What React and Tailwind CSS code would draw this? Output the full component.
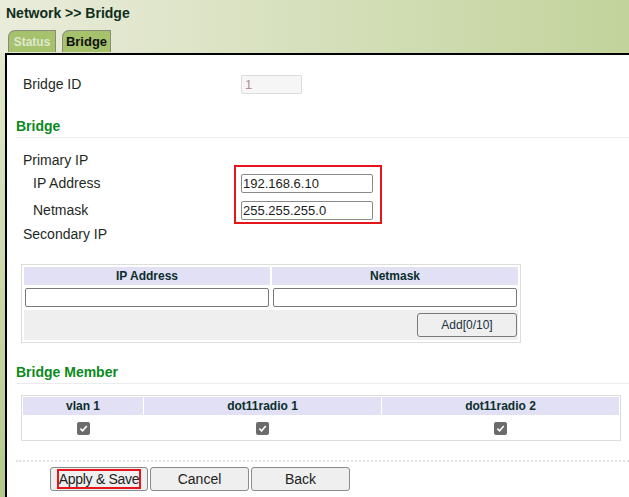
import React from "react";

const Tab = ({ label, active, className = "" }) => (
  <div
    className={`h-[22px] flex items-center justify-center border border-b-0 border-[#8a8a7a] rounded-tl-[7px] bg-[#a6c26c] text-[12px] font-bold ${
      active ? "text-[#111]" : "text-[#dfe7cf]"
    } ${className}`}
  >
    {label}
  </div>
);

const Check = () => (
  <span className="inline-flex items-center justify-center w-[13px] h-[13px] rounded-[2px] bg-[#6b6b6b]">
    <svg width="9" height="9" viewBox="0 0 10 10">
      <path d="M1.5 5.2 L4 7.6 L8.6 2.2" fill="none" stroke="#fff" strokeWidth="1.8" />
    </svg>
  </span>
);

const Heading = ({ children }) => (
  <div className="h-[20px] pb-[4px] border-b border-[#ececec] text-[14px] leading-[16px] font-bold text-[#0a8a1a]">
    {children}
  </div>
);

const Btn = ({ children, className = "" }) => (
  <button className={`h-[24px] bg-[#efefef] border border-[#8a8a8a] rounded-[3px] text-[14px] text-[#222] ${className}`}>
    {children}
  </button>
);

export default function App() {
  return (
    <div className="min-h-[497px] w-full overflow-hidden bg-gradient-to-b from-[#e8ecd7] to-[#b4c888] font-['Liberation_Sans',Arial,sans-serif]">
      {/* header band */}
      <div className="h-[53px] pt-[5px] pl-[6px] bg-gradient-to-r from-[#eaecdb] to-[#c2d39b]">
        <h1 className="text-[14px] leading-[16px] font-bold text-[#102e1c]">Network &gt;&gt; Bridge</h1>
        <div className="flex gap-[6px] mt-[9px] ml-[2px]">
          <Tab label="Status" className="w-[48px]" />
          <Tab label="Bridge" active className="w-[49px] text-[13px]" />
        </div>
      </div>

      {/* content panel */}
      <div className="ml-[5px] border-l-2 border-t-2 border-black bg-white min-h-[444px] pl-[9px] pt-px text-[14px] text-[#1e2a1e]">
        <div className="flex items-center h-[19px] mt-[19px]">
          <span className="w-[225px] pl-[7px]">Bridge ID</span>
          <input
            disabled
            value="1"
            readOnly
            className="w-[61px] h-[19px] border border-[#dcdcdc] rounded-[2px] bg-[#f6f6f6] px-[3px] text-[13px] text-[#b09090]"
          />
        </div>

        <div className="mt-[24px]">
          <Heading>Bridge</Heading>
        </div>

        <div className="relative pt-[14px]">
          <div className="h-[16px] leading-[16px] pl-[7px]">Primary IP</div>
          <div className="flex items-center h-[19px] mt-[6px]">
            <span className="w-[225px] pl-[17px]">IP Address</span>
            <input
              readOnly
              value="192.168.6.10"
              className="w-[132px] h-[19px] border border-[#8a8a8a] rounded-[2px] px-[1px] text-[13px] text-[#222]"
            />
          </div>
          <div className="flex items-center h-[19px] mt-[8px]">
            <span className="w-[225px] pl-[17px]">Netmask</span>
            <input
              readOnly
              value="255.255.255.0"
              className="w-[132px] h-[19px] border border-[#8a8a8a] rounded-[2px] px-[1px] text-[13px] text-[#222]"
            />
          </div>
          <div className="mt-[6px] h-[16px] leading-[16px] pl-[7px]">Secondary IP</div>
          {/* annotation box */}
          <div className="absolute left-[218px] top-[27px] w-[148px] h-[59px] border-2 border-[#e8141c]" />
        </div>

        {/* secondary ip table */}
        <table className="mt-[22px] ml-[5px] w-[500px] border border-[#dcdcdc] border-separate border-spacing-[2px] bg-white">
          <thead>
            <tr className="bg-[#e1e0f5] text-[12px] font-bold text-[#0c2e2c]">
              <th className="h-[18px] font-bold">IP Address</th>
              <th className="h-[18px] font-bold">Netmask</th>
            </tr>
          </thead>
          <tbody>
            <tr>
              <td className="px-[1px]">
                <input className="w-full h-[19px] border border-[#7a7a7a] rounded-[2px]" />
              </td>
              <td className="px-[1px]">
                <input className="w-full h-[19px] border border-[#7a7a7a] rounded-[2px]" />
              </td>
            </tr>
            <tr className="bg-[#efefef]">
              <td colSpan={2} className="h-[30px] text-right pr-[1px]">
                <button className="w-[100px] h-[24px] bg-[#efefef] border border-[#7a7a7a] rounded-[3px] text-[12px] text-[#1a3040]">
                  Add[0/10]
                </button>
              </td>
            </tr>
          </tbody>
        </table>

        <div className="mt-[21px]">
          <Heading>Bridge Member</Heading>
        </div>

        {/* member table */}
        <table className="mt-[11px] ml-[5px] w-[600px] border border-[#dcdcdc] border-separate border-spacing-[1px]">
          <thead>
            <tr className="bg-[#e1e0f5] text-[12px] text-[#0c2e2c]">
              <th className="h-[17px] w-[120px] font-bold">vlan 1</th>
              <th className="h-[17px] w-[237px] font-bold">dot11radio 1</th>
              <th className="h-[17px] font-bold">dot11radio 2</th>
            </tr>
          </thead>
          <tbody>
            <tr>
              <td className="h-[23px] text-center align-top pt-[2px]"><Check /></td>
              <td className="h-[23px] text-center align-top pt-[2px]"><Check /></td>
              <td className="h-[23px] text-center align-top pt-[2px]"><Check /></td>
            </tr>
          </tbody>
        </table>

        <div className="mt-[19px] border-t-2 border-dotted border-[#e2e2e2]" />

        <div className="flex gap-[2px] mt-[5px] ml-[34px]">
          <Btn className="w-[98px]">
            <span className="border-2 border-[#e8141c] px-0 tracking-[-0.3px]">Apply &amp; Save</span>
          </Btn>
          <Btn className="w-[99px]">Cancel</Btn>
          <Btn className="w-[99px]">Back</Btn>
        </div>
      </div>
    </div>
  );
}
